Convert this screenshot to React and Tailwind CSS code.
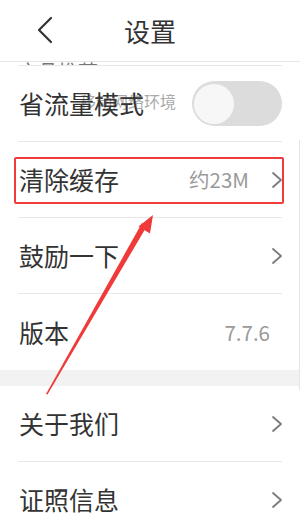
import React from "react";

const font = { fontFamily: '"Noto Sans CJK SC", "Noto Sans", sans-serif' };

function Chevron() {
  return (
    <svg width="12" height="18" viewBox="0 0 12 18" className="shrink-0">
      <path d="M2 2 L10 9 L2 16" fill="none" stroke="#7a7a7a" strokeWidth="1.8" strokeLinecap="round" strokeLinejoin="round" />
    </svg>
  );
}

function Sep() {
  return <div className="mx-[18px] h-px bg-[#e8e8e8]" />;
}

function Row({ label, value, chevron, children }) {
  return (
    <div className="flex h-[75px] items-center pl-[19px] pr-[17px]">
      <span className="text-[25px] leading-none text-[#333]">{label}</span>
      <div className="ml-auto flex items-center">
        {value && <span className="text-[20.5px] leading-none text-[#9a9a9a]">{value}</span>}
        {chevron && <span className="ml-[22px] flex"><Chevron /></span>}
        {children}
      </div>
    </div>
  );
}

export default function App() {
  return (
    <div className="relative h-[527px] w-[300px] overflow-hidden bg-white" style={font}>
      {/* header */}
      <div className="relative flex h-[62px] items-center justify-center border-b border-[#e6e6e6]">
        <svg width="20" height="28" viewBox="0 0 20 28" className="absolute left-[35px] top-[16px]">
          <path d="M16 2 L4 14 L16 26" fill="none" stroke="#333" strokeWidth="2.2" strokeLinecap="round" strokeLinejoin="round" />
        </svg>
        <span className="text-[26px] leading-none text-[#333]">设置</span>
      </div>

      {/* partially scrolled text */}
      <div className="flex h-[3px] items-end overflow-hidden pl-[18px]">
        <span className="translate-y-[17px] text-[20px] leading-none text-[#777]">产品推荐</span>
      </div>
      <Sep />

      <div className="relative flex h-[75px] items-center pl-[19px] pr-[18px]">
        <span className="absolute left-[80px] top-[27px] text-[16px] leading-none text-[#aaa]">移动网络环境</span>
        <span className="relative text-[25px] leading-none text-[#333]">省流量模式</span>
        <div className="ml-auto flex h-[45px] w-[90px] items-center rounded-full bg-[#dcdcdc] pl-[2px]">
          <div className="h-[40px] w-[40px] rounded-full bg-[#f7f7f7]" />
        </div>
      </div>
      <Sep />
      <Row label="清除缓存" value="约23M" chevron />
      <Sep />
      <Row label="鼓励一下" chevron />
      <Sep />
      <div className="flex h-[76px] items-center pl-[19px] pr-[30px]">
        <span className="text-[25px] leading-none text-[#333]">版本</span>
        <span className="ml-auto text-[20.5px] leading-none text-[#9a9a9a]">7.7.6</span>
      </div>
      <div className="h-[16px] bg-[#f2f2f2]" />
      <Row label="关于我们" chevron />
      <Sep />
      <Row label="证照信息" chevron />

      {/* right edge line */}
      <div className="absolute right-0 top-[140px] h-[250px] w-px bg-[#e4e4e4]" />

      {/* annotation: red box */}
      <div className="pointer-events-none absolute left-[14px] top-[157px] h-[47px] w-[270px] rounded-[2px] border-2 border-[#f23a3a]" />

      {/* annotation: arrow */}
      <svg className="pointer-events-none absolute left-0 top-0" width="300" height="527" viewBox="0 0 300 527">
        <polygon points="46,394 47.5,394.5 147,226 142,223" fill="#f03a3a" />
        <polygon points="153,215 138.5,226.5 150,233.5" fill="#f03a3a" />
      </svg>
    </div>
  );
}
